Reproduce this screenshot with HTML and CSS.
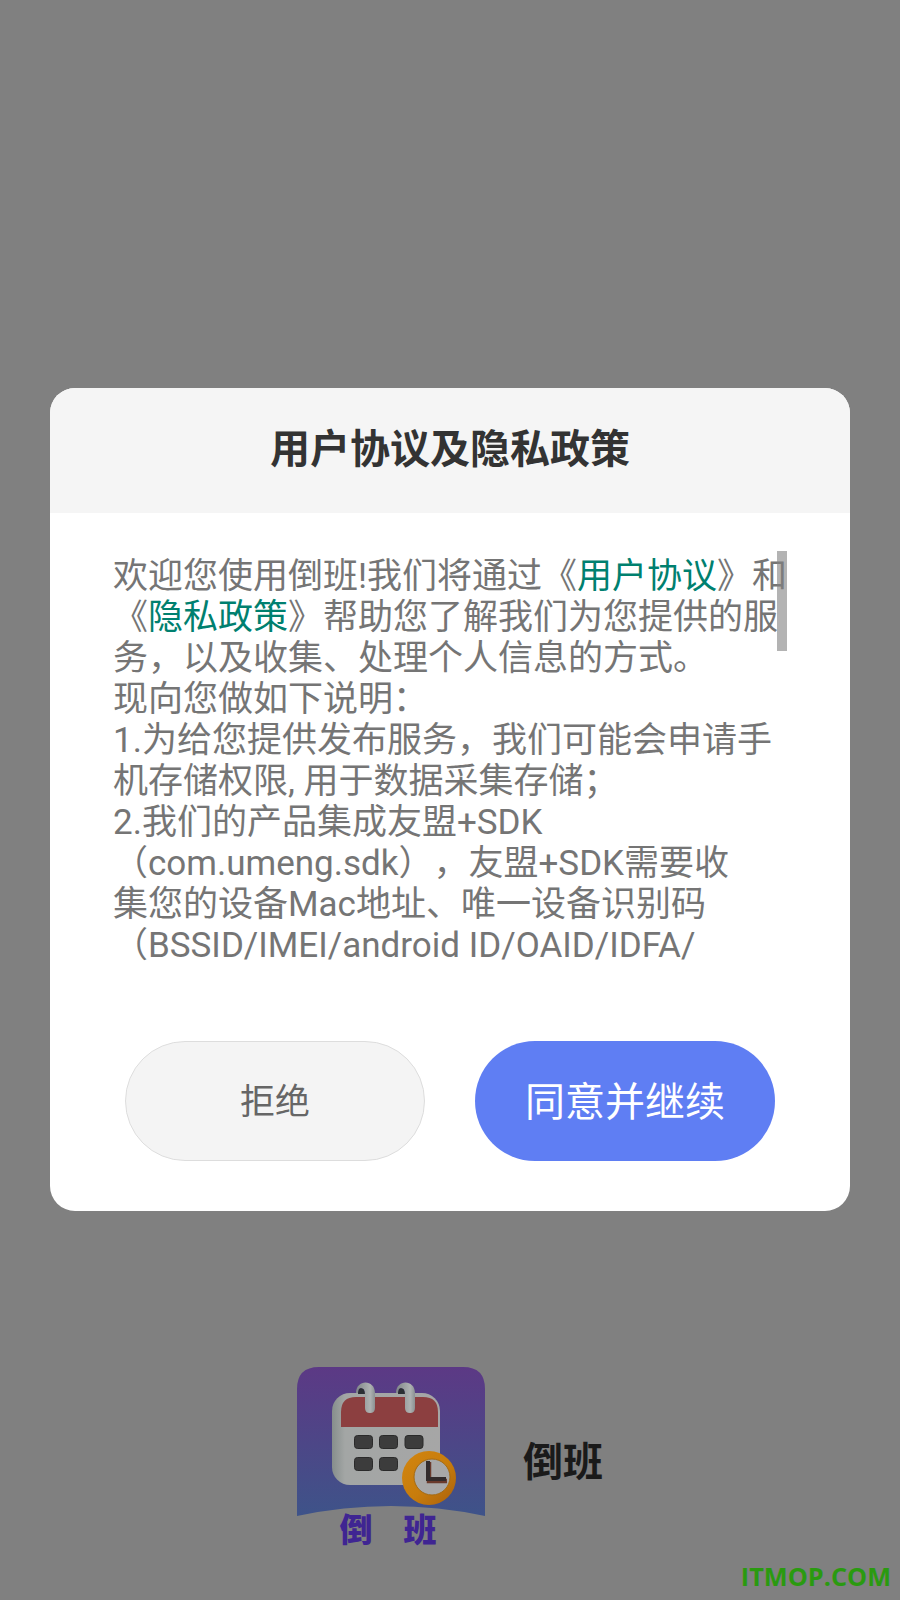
FILE: index.html
```html
<!DOCTYPE html>
<html lang="zh-CN">

<head>
    <meta charset="UTF-8">
    <meta name="viewport" content="width=device-width, initial-scale=1.0">
    <title>倒班</title>
    <link rel="stylesheet" href="styles.css">
</head>

<body>
    <main class="dialog">
        <h1 class="dialog-title">用户协议及隐私政策</h1>
        <div class="dialog-body">
            <p class="terms">欢迎您使用倒班!我们将通过《<a href="#">用户协议</a>》和<br>
                《<a href="#">隐私政策</a>》帮助您了解我们为您提供的服<br>
                务，以及收集、处理个人信息的方式。<br>
                现向您做如下说明：<br>
                1.为给您提供发布服务，我们可能会申请手<br>
                机存储权限, 用于数据采集存储；<br>
                2.我们的产品集成友盟+SDK<br>
                （com.umeng.sdk），友盟+SDK需要收<br>
                集您的设备Mac地址、唯一设备识别码<br>
                （BSSID/IMEI/android ID/OAID/IDFA/</p>
            <span class="scrollbar"></span>
        </div>
        <div class="actions">
            <button class="btn btn-refuse">拒绝</button>
            <button class="btn btn-agree">同意并继续</button>
        </div>
    </main>

    <footer class="brand">
        <div class="logo">
            <svg class="logo-art" width="188" height="150" viewBox="0 0 188 150">
                <defs>
                    <linearGradient id="tile" x1="0" y1="0" x2="0" y2="1">
                        <stop offset="0" stop-color="#5c3985" />
                        <stop offset="1" stop-color="#3e5389" />
                    </linearGradient>
                    <linearGradient id="ring" x1="0" y1="0" x2="1" y2="1">
                        <stop offset="0" stop-color="#d2850f" />
                        <stop offset="0.55" stop-color="#c77c0c" />
                        <stop offset="1" stop-color="#a9600c" />
                    </linearGradient>
                    <linearGradient id="edge" x1="0" y1="0" x2="1" y2="0">
                        <stop offset="0" stop-color="#868e8c" />
                        <stop offset="0.12" stop-color="#a3a6a5" />
                        <stop offset="1" stop-color="#a6a6a6" />
                    </linearGradient>
                    <linearGradient id="tube" x1="0" y1="0" x2="1" y2="0">
                        <stop offset="0" stop-color="#7f8687" />
                        <stop offset="0.75" stop-color="#aeb2b2" />
                        <stop offset="1" stop-color="#8b9192" />
                    </linearGradient>
                    <g id="binder">
                        <path d="M61 27Q61 21 64 21Q68 21 68 27Z" fill="#2b2f33" />
                        <path d="M59 26C59 12 78 12 78 26V41Q78 46 73 46Q68 46 68 41V27Q68 21 64 21Q61 21 61 26Z" fill="url(#tube)" />
                    </g>
                </defs>
                <path d="M0 149V22Q0 0 22 0H166Q188 0 188 22V149Q94 129 0 149Z" fill="url(#tile)" />

                <!-- calendar -->
                <rect x="35" y="26" width="108" height="92" rx="18" fill="url(#edge)" />
                <path d="M44 60V45Q44 30 59 30H126Q141 30 141 45V60Z" fill="#8c3f40" />
                <use href="#binder" />
                <use href="#binder" x="40" />
                <rect class="cell" x="57.5" y="68.5" width="18" height="13" rx="3" />
                <rect class="cell" x="82.5" y="68.5" width="18" height="13" rx="3" />
                <rect class="cell" x="108" y="68.5" width="18" height="13" rx="3" />
                <rect class="cell" x="57.5" y="90.5" width="18" height="13" rx="3" />
                <rect class="cell" x="82.5" y="90.5" width="18" height="13" rx="3" />

                <!-- clock -->
                <circle cx="132" cy="111" r="27" fill="url(#ring)" />
                <circle cx="135" cy="110" r="18" fill="#a8a8a8" stroke="#a56a12" stroke-width="1" />
                <path d="M132 95V114H150" fill="none" stroke="#6a3a2c" stroke-width="4.5" />
                <path d="M131 94V112H149" fill="none" stroke="#332c2c" stroke-width="4" />
            </svg>
            <div class="logo-name"><span>倒</span><span>班</span></div>
        </div>
        <strong class="app-name">倒班</strong>
    </footer>

    <span class="watermark">ITMOP.COM</span>
</body>

</html>
```

FILE: styles.css
```css
* {
    box-sizing: border-box;
    margin: 0;
    padding: 0;
}

body {
    position: relative;
    height: 1600px;
    overflow: hidden;
    background-color: #808080;
    font-family: Roboto, "Noto Sans CJK SC", sans-serif;
    text-spacing-trim: space-all;
}

.dialog {
    width: 800px;
    margin: 388px 0 0 50px;
    border-radius: 25px;
    overflow: hidden;
    background-color: white;
}

.dialog-title {
    height: 125px;
    line-height: 124px;
    background-color: #f5f5f5;
    color: #333;
    font-size: 40px;
    font-weight: 700;
    text-align: center;
}

.dialog-body {
    position: relative;
    height: 415px;
    margin: 38px 63px 0;
    overflow: hidden;
}

.terms {
    padding-top: 5px;
    color: #757575;
    font-size: 35px;
    line-height: 41px;
    white-space: nowrap;
}

.terms a {
    color: #00806f;
    text-decoration: none;
}

.scrollbar {
    position: absolute;
    top: 0;
    right: 0;
    width: 10px;
    height: 100px;
    background-color: rgba(128, 128, 128, .6);
}

.actions {
    display: flex;
    gap: 50px;
    padding: 75px 75px 50px;
}

.btn {
    width: 300px;
    height: 120px;
    padding: 0 0 6px;
    border-radius: 60px;
    font-family: inherit;
    font-size: 35px;
}

.btn-refuse {
    border: 1px solid #ddd;
    background-color: #f4f4f4;
    color: #666;
}

.btn-agree {
    padding-bottom: 4px;
    border: 0;
    background-color: #5f7ef3;
    color: white;
    font-size: 40px;
}

.brand {
    display: flex;
    align-items: flex-start;
    gap: 38px;
    margin: 156px 0 0 297px;
}

.logo {
    width: 188px;
}

.logo-art {
    display: block;
}

.cell {
    fill: #3c3c3c;
    stroke: #2a2a2a;
}

.logo-name {
    display: flex;
    justify-content: center;
    gap: 31px;
    margin: -3px 0 0 -6px;
    color: #3f2592;
    font-size: 33px;
    font-weight: 900;
    line-height: 34px;
}

.app-name {
    margin-top: 70px;
    color: #1a1a1a;
    font-size: 40px;
    font-weight: 700;
    line-height: 52px;
}

.watermark {
    position: absolute;
    right: 9px;
    bottom: 7px;
    color: #2a9a10;
    font-family: "Open Sans", sans-serif;
    font-size: 25.3px;
    font-weight: 700;
}
```
